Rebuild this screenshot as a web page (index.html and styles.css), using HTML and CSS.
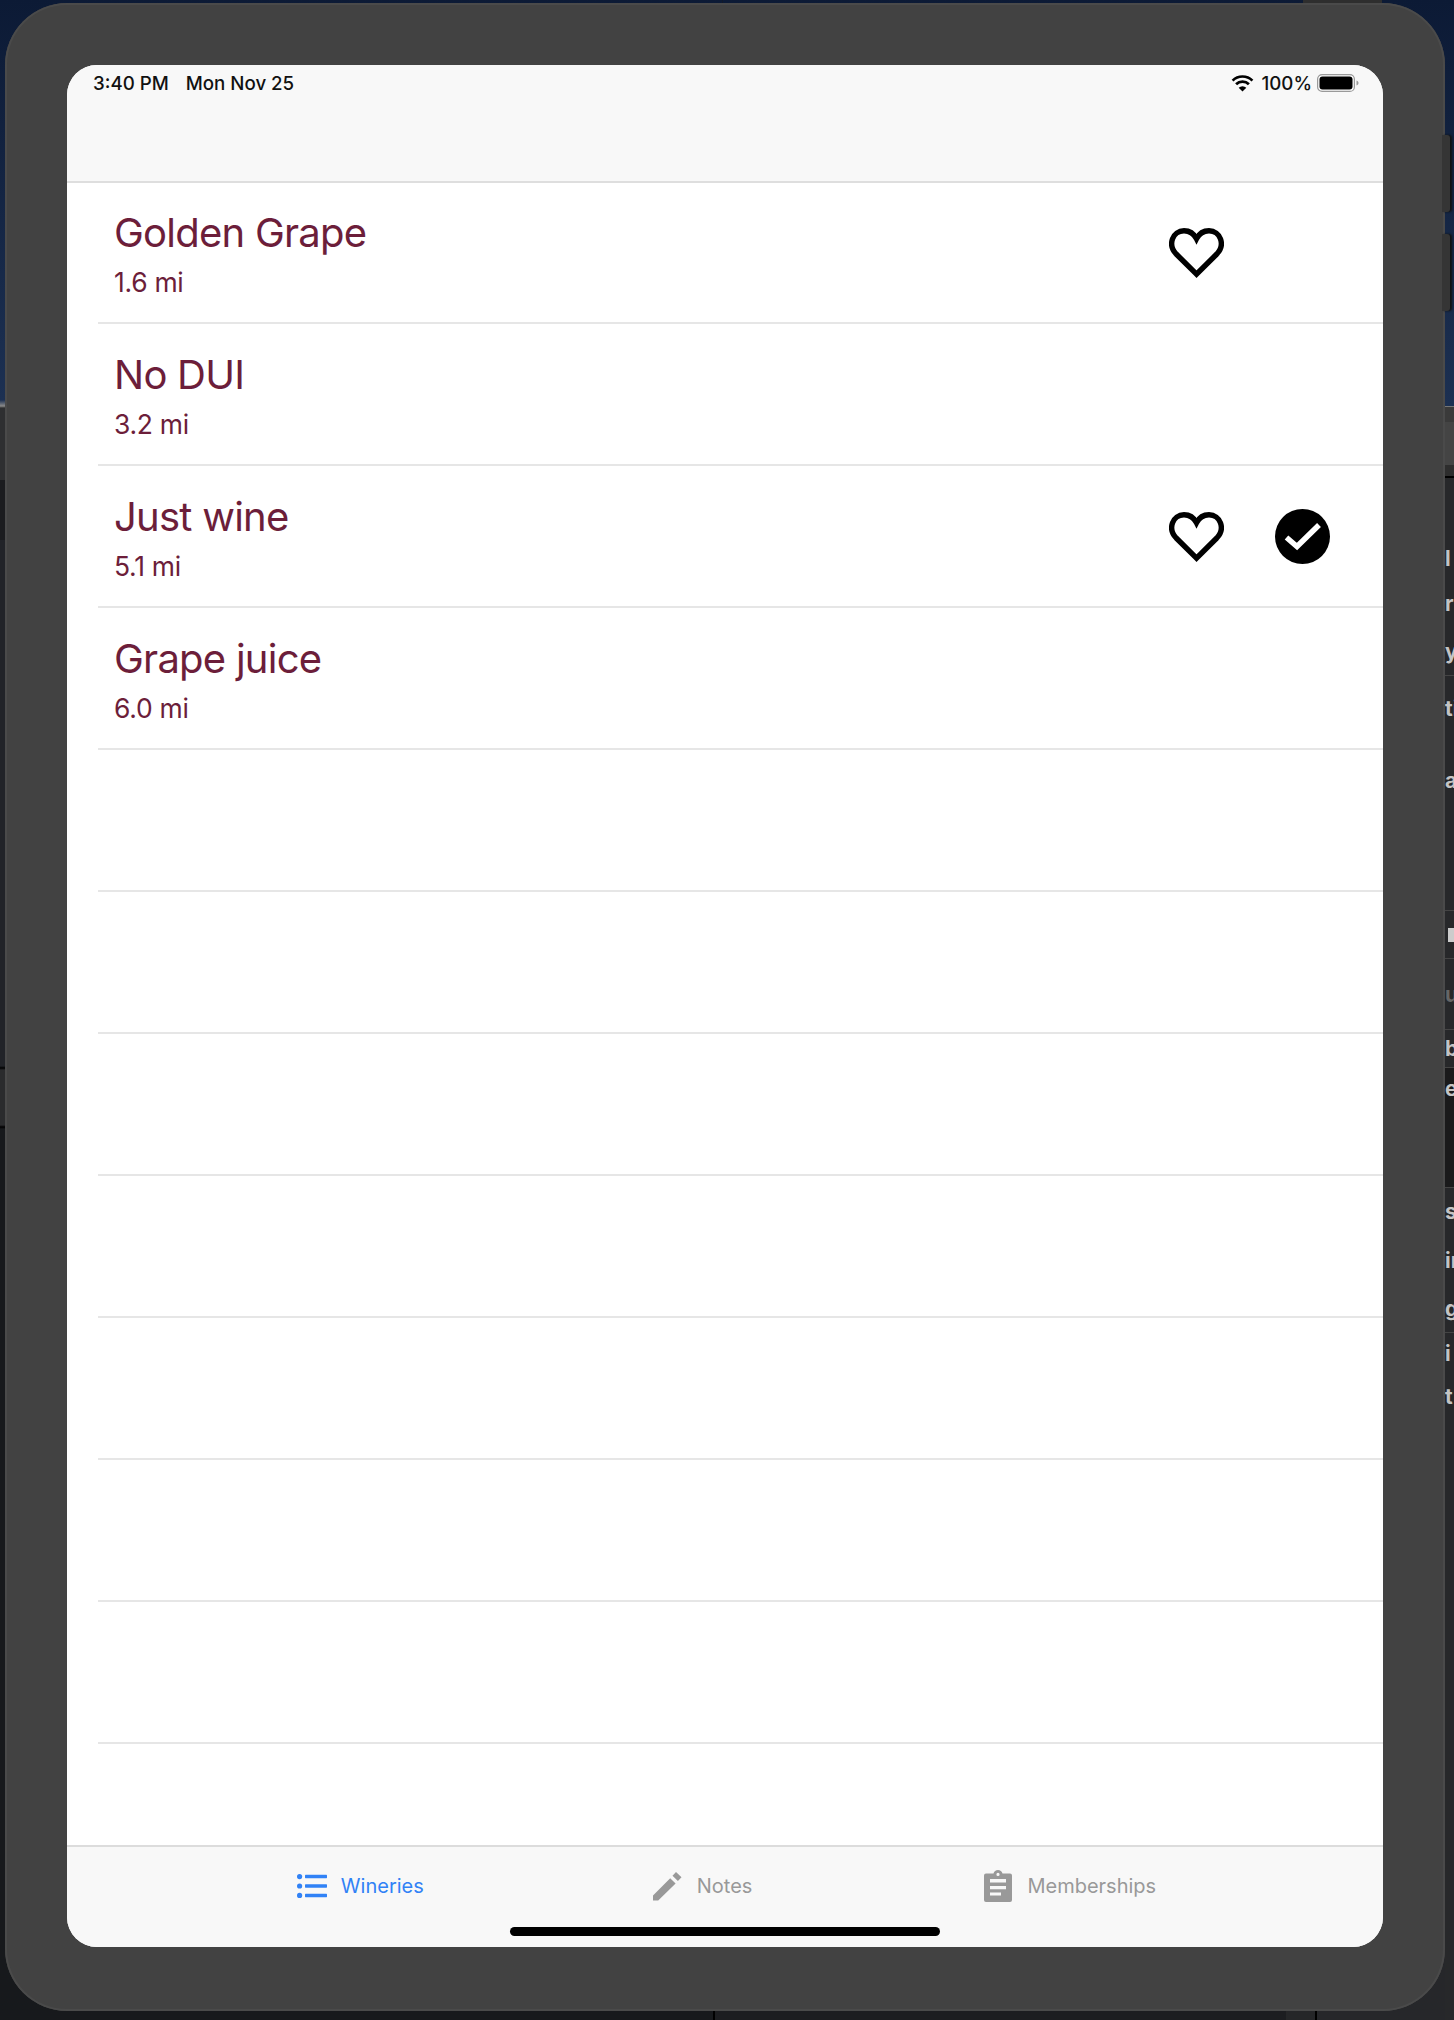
FILE: index.html
```html
<!DOCTYPE html>
<html lang="en">
<head>
    <meta charset="UTF-8">
    <meta name="viewport" content="width=device-width, initial-scale=1.0">
    <link rel="stylesheet" href="styles.css">
    <title>Wineries</title>
</head>
<body>
    <div class="desktop">
        <div class="stage">
            <div class="device">
                <span class="hw-btn hw-top"></span>
                <span class="hw-btn hw-side-a"></span>
                <span class="hw-btn hw-side-b"></span>
                <div class="screen">
                    <header class="topbar">
                        <div class="status">
                            <span class="clock">3:40 PM</span>
                            <span class="date">Mon Nov 25</span>
                            <svg class="wifi" viewBox="0 0 23 17">
                                <path d="M1.6 5.6a14 14 0 0 1 19.8 0M5.1 9.2a9 9 0 0 1 12.8 0" fill="none" stroke="#000" stroke-width="2.7"/>
                                <path d="M11.5 16.6L7.7 12.8a5.4 5.4 0 0 1 7.6 0z"/>
                            </svg>
                            <span class="pct">100%</span>
                            <svg class="battery" viewBox="0 0 42 18">
                                <rect x="0.6" y="0.6" width="36.8" height="16.8" rx="4.5" fill="none" stroke="#9a9a9a" stroke-width="1.2"/>
                                <rect x="2.5" y="2.5" width="33" height="13" rx="3"/>
                                <path d="M39.5 6.5c1.3.4 2 1.3 2 2.5s-.7 2.1-2 2.5z" fill="#9a9a9a"/>
                            </svg>
                        </div>
                    </header>

                    <main class="list">
                        <div class="row">
                            <div class="winery">
                                <div class="name">Golden Grape</div>
                                <div class="dist">1.6 mi</div>
                            </div>
                            <svg class="ic-heart" viewBox="0 0 55 50"><use href="#heart"/></svg>
                            <span class="slot"></span>
                        </div>
                        <div class="row">
                            <div class="winery">
                                <div class="name">No DUI</div>
                                <div class="dist">3.2 mi</div>
                            </div>
                        </div>
                        <div class="row">
                            <div class="winery">
                                <div class="name">Just wine</div>
                                <div class="dist">5.1 mi</div>
                            </div>
                            <svg class="ic-heart" viewBox="0 0 55 50"><use href="#heart"/></svg>
                            <svg class="ic-check" viewBox="0 0 55 55">
                                <circle cx="27.5" cy="27.5" r="27.5"/>
                                <path d="M11.5 28.5l10.5 9L44 16" fill="none" stroke="#fff" stroke-width="5.5"/>
                            </svg>
                        </div>
                        <div class="row">
                            <div class="winery">
                                <div class="name">Grape juice</div>
                                <div class="dist">6.0 mi</div>
                            </div>
                        </div>
                        <div class="row"></div>
                        <div class="row"></div>
                        <div class="row"></div>
                        <div class="row"></div>
                        <div class="row"></div>
                        <div class="row"></div>
                        <div class="row"></div>
                    </main>

                    <nav class="tabbar">
                        <div class="tabs">
                            <a class="tab active">
                                <svg class="ic-list" viewBox="0 0 30 24" fill="currentColor">
                                    <circle cx="2.6" cy="2.6" r="2.6"/>
                                    <circle cx="2.6" cy="12" r="2.6"/>
                                    <circle cx="2.6" cy="21.4" r="2.6"/>
                                    <rect x="8" y="0.8" width="22" height="3.4" rx="0.6"/>
                                    <rect x="8" y="10.3" width="22" height="3.4" rx="0.6"/>
                                    <rect x="8" y="19.8" width="22" height="3.4" rx="0.6"/>
                                </svg>
                                <span>Wineries</span>
                            </a>
                            <a class="tab">
                                <svg class="ic-pencil" viewBox="0 0 29 29" fill="currentColor">
                                    <path d="M23 0l5.500 5.200-3.600 3.900-5.400-5.300zM17.200 6.200l5.400 5.300L5.200 28.600H0v-5.100z"/>
                                </svg>
                                <span>Notes</span>
                            </a>
                            <a class="tab">
                                <svg class="ic-clip" viewBox="0 0 28 32" fill="currentColor">
                                    <path fill-rule="evenodd" d="M2 3.500h7.500C10 1.400 11.800 0 14 0s4 1.400 4.500 3.500H26a2 2 0 0 1 2 2V30a2 2 0 0 1-2 2H2a2 2 0 0 1-2-2V5.500a2 2 0 0 1 2-2zM14 2.800a1.600 1.600 0 1 0 0 3.200 1.600 1.600 0 0 0 0-3.200zM6 9v3.400h16V9zM6 16v3.200h16V16zM6 22.400v3.200h11v-3.200z"/>
                                </svg>
                                <span>Memberships</span>
                            </a>
                        </div>
                        <div class="homebar"></div>
                    </nav>
                </div>
            </div>
            <div class="floor">
                <span class="floor-a"></span>
                <span class="floor-b"></span>
                <span class="floor-c"></span>
                <span class="floor-d"></span>
            </div>
        </div>

        <aside class="behind">
            <div class="b-wall"></div>
            <div class="b-band b-h16 b-light"></div>
            <div class="b-band b-h43 b-mid"></div>
            <div class="b-band b-h13 b-black"></div>
            <div class="b-row b-h60"></div>
            <div class="b-row b-h40"><span>l</span></div>
            <div class="b-row b-h50"><span>r</span></div>
            <div class="b-row b-h48 b-line"><span>y</span></div>
            <div class="b-row b-h64"><span>ti</span></div>
            <div class="b-row b-h80"><span>a</span></div>
            <div class="b-row b-h91 b-line"></div>
            <div class="b-row b-h48 b-line"><span class="b-tick"></span></div>
            <div class="b-row b-h71 b-line"><span class="b-dim">u</span></div>
            <div class="b-row b-h38 b-line"><span>b</span></div>
            <div class="b-row b-h120 b-dark b-line"><span>e</span></div>
            <div class="b-row b-h47"><span>s</span></div>
            <div class="b-row b-h50"><span>in</span></div>
            <div class="b-row b-h48 b-line"><span>g</span></div>
            <div class="b-row b-h40"><span>i</span></div>
            <div class="b-row b-h47"><span>t</span></div>
        </aside>
    </div>

    <svg class="defs" width="0" height="0">
        <symbol id="heart" viewBox="0 0 55 50">
            <path d="M27.500 46.200L7.200 26C-1.800 16.500 3.800 2.800 15 2.800c5.600 0 10 3.200 12.500 8 2.500-4.800 6.900-8 12.500-8 11.200 0 16.800 13.700 7.800 23.200z" fill="none" stroke="#000" stroke-width="5.400"/>
        </symbol>
    </svg>
</body>
</html>
```

FILE: styles.css
```css
*{box-sizing:border-box;}
html,body{margin:0;padding:0;}
body{width:1454px;height:2020px;overflow:hidden;background:#17191c;font-family:Inter,'Noto Sans',sans-serif;}
.defs{position:absolute;}

/* whatever is on the desktop behind the simulator */
.desktop{display:grid;grid-template-columns:1fr 9px;height:2020px;}
.stage{
    display:flex;flex-direction:column;padding-left:5px;padding-top:3px;
    background:
        linear-gradient(#0c1a35 0,#1c3052 400px,#8a8a8a 406px,#2e2f31 408px,#2e2f31 480px,#1b1c1f 480px,#1b1c1f 540px,#212328 540px,#212328 1066px,#000 1068px,#2a2b2d 1070px,#2a2b2d 1125px,#000 1127px,#17191c 1129px) left/50% 100% no-repeat,
        linear-gradient(#0c1a35 0,#1c3052 400px,#26272a 408px) right/50% 100% no-repeat;
}

.device{
    position:relative;width:1440px;height:2008px;padding:62px 62px 64px 62px;
    background:#424242;border-radius:62px;
    box-shadow:inset 0 0 0 2px #4a4a4a;
}
.hw-btn{position:absolute;background:#353535;box-shadow:2px 0 2px #111;}
.hw-top{top:-3px;left:1298px;width:79px;height:3px;background:#2e2e2e;box-shadow:none;}
.hw-side-a{top:132px;left:1437px;width:8px;height:77px;border-radius:0 3px 3px 0;}
.hw-side-b{top:231px;left:1437px;width:8px;height:77px;border-radius:0 3px 3px 0;}

.screen{display:flex;flex-direction:column;height:100%;background:#fff;border-radius:30px;overflow:hidden;}

.topbar{height:118px;flex:none;background:#f8f8f8;border-bottom:2px solid #dedede;position:relative;z-index:1;}
.status{display:flex;align-items:center;height:36px;padding:0 24px 0 26px;font-size:18.7px;font-weight:500;color:#111;}
.date{margin-left:17px;flex:1;}
.wifi{width:23px;height:17px;margin-right:8px;}
.pct{margin-right:5px;}
.battery{width:42px;height:18px;}

.list{flex:1;margin-top:-1px;overflow:hidden;}
.row{display:flex;align-items:center;height:142px;margin-left:31px;padding:0 53px 0 16px;border-bottom:2px solid #e6e6e6;}
.winery{flex:1;color:#6c1e3a;padding-top:4px;}
.name{font-size:40px;line-height:48px;letter-spacing:-0.75px;}
.dist{font-size:26.5px;line-height:34px;margin-top:8px;letter-spacing:-0.3px;}
.ic-heart{width:55px;height:50px;margin-top:2px;}
.ic-check{width:55px;height:55px;margin-left:51px;}
.slot{width:55px;margin-left:51px;}

.tabbar{height:102px;flex:none;background:#f8f8f8;border-top:2px solid #dcdcdc;display:flex;flex-direction:column;align-items:center;}
.tabs{display:flex;align-items:center;gap:232px;height:78px;padding-left:3px;}
.tab{display:flex;align-items:center;gap:15px;color:#999;font-size:20px;}
.tab.active{color:#3182f6;gap:14px;margin-right:-3px;}
.ic-list{width:30px;height:24px;}
.ic-pencil{width:29px;height:29px;}
.ic-clip{width:28px;height:32px;}
.homebar{width:430px;height:9px;margin-top:2px;background:#000;border-radius:5px;}

.floor{display:flex;flex:1;margin-left:-5px;}
.floor span{display:block;height:100%;}
.floor-a{width:715px;background:#17191c;border-right:2px solid #000;}
.floor-b{width:571px;background:#1c1d20;}
.floor-c{width:31px;background:#252628;border-right:2px solid #000;}
.floor-d{flex:1;background:#26272a;}

/* strip of another window showing on the right of the simulator */
.behind{overflow:hidden;background:#27282a;color:#c4c4c4;font-size:21px;font-weight:700;}
.b-wall{height:406px;background:linear-gradient(#0c1a35,#1c3052);}
.b-band{width:100%;}
.b-light{background:#3a3a3a;border-top:1px solid #777;}
.b-mid{background:#444;}
.b-black{background:#2d2d2d;border-bottom:2px solid #000;}
.b-row{display:flex;align-items:center;white-space:nowrap;}
.b-line{border-bottom:1px solid #444;}
.b-dark{background:#1a1a1b;align-items:flex-start;padding-top:8px;}
.b-dim{color:#666;}
.b-tick{display:block;width:9px;height:14px;margin-left:3px;background:#ccc;}
.b-h16{height:16px;}
.b-h38{height:38px;}
.b-h40{height:40px;}
.b-h43{height:43px;}
.b-h13{height:13px;}
.b-h47{height:47px;}
.b-h48{height:48px;}
.b-h50{height:50px;}
.b-h60{height:60px;}
.b-h64{height:64px;}
.b-h71{height:71px;}
.b-h80{height:80px;}
.b-h91{height:91px;}
.b-h120{height:120px;}
```
